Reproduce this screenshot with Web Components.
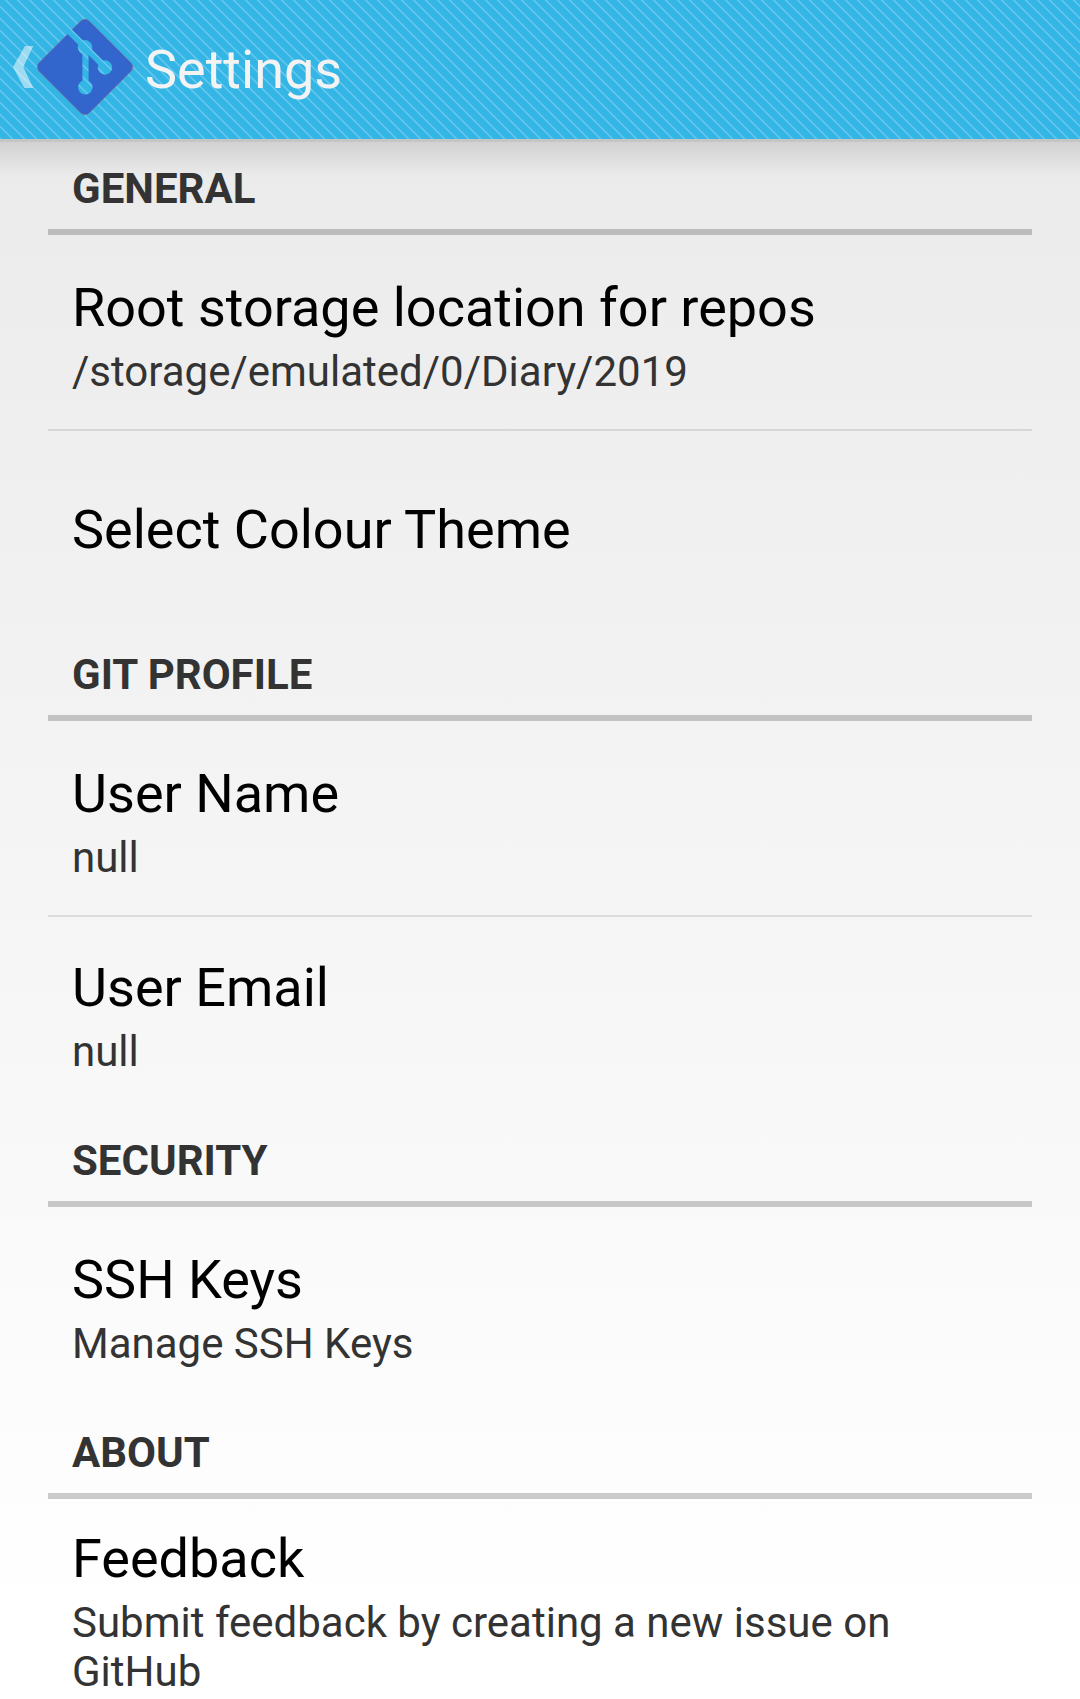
<!DOCTYPE html>
<html lang="en"><head><meta charset="utf-8"><title>Settings</title>
<style>body{margin:0;font-family:Roboto,"Liberation Sans",sans-serif}</style></head><body>
<settings-screen></settings-screen>
<script>
const define=(name,html,setup)=>customElements.define(name,class extends HTMLElement{
 connectedCallback(){ if(this.shadowRoot)return; const r=this.attachShadow({mode:'open'}); r.innerHTML=html; if(setup)setup(this,r);}
});
define('app-logo',`<style>:host{display:block;width:98px;height:98px;flex:none}svg{display:block}</style>
<svg width="98" height="98" viewBox="36 18 98 98"><defs><mask id="m" maskUnits="userSpaceOnUse" x="30" y="10" width="110" height="110"><rect x="30" y="10" width="110" height="110" fill="#fff"/>
<g stroke="#000" stroke-width="6.200" fill="none"><path d="M66 28L105 67"/><path d="M85.500 48V87"/></g><g fill="#000"><circle cx="85" cy="47.300" r="7.200"/><circle cx="105" cy="67.500" r="7.200"/><circle cx="85.300" cy="87.300" r="7.200"/></g></mask></defs>
<g mask="url(#m)"><rect x="49.500" y="31.500" width="71" height="71" rx="6" transform="rotate(45 85 67)" fill="#3366cc" stroke="#a0607a" stroke-width=".5"/></g></svg>`);
define('action-bar',`<style>:host{display:flex;align-items:flex-start;height:139px;box-sizing:border-box;background:#33b5e5;overflow:hidden;background-image:url("data:image/svg+xml,%3Csvg xmlns='http://www.w3.org/2000/svg' width='12' height='12'%3E%3Cpath d='M-12 -5.7L12 18.3M-12 -17.7L24 18.3M-12 6.3L12 30.3' stroke='%2366c7ec' stroke-width='1.6'/%3E%3C/svg%3E")}
.up{display:block;flex:none;width:24px;height:44px;margin:45px 0 0 12px}app-logo{margin:18px 0 0}h1{margin:38px 0 0 11px;font-size:54px;line-height:63px;font-weight:400;color:#f3f3f3}</style>
<svg class="up" viewBox="0 0 24 44"><path d="M13 1H21.300L11.300 22L21.300 43H12.300L1 22Z" fill="#fff" fill-opacity=".52"/></svg><app-logo></app-logo><h1><slot></slot></h1>`);
define('pref-category',`<style>:host{display:flex;flex-direction:column;justify-content:flex-end;box-sizing:border-box;height:98px;margin:0 48px 2px;border-bottom:6px solid rgba(0,0,0,.2)}
:host(:first-of-type){height:96px}
h2{margin:0;padding:0 24px 16px;font-size:42px;line-height:49px;font-weight:700;color:#333}</style><h2><slot></slot></h2>`);
define('pref-item',`<style>:host{display:block;box-sizing:border-box;height:192px;margin:0 48px;padding:39px 24px 0}
:host([divided]){height:194px;border-bottom:2px solid rgba(0,0,0,.1)}
:host([single]){padding-top:67px}
:host([multiline]){height:auto;padding:26px 24px 20px}
.t{font-size:54px;line-height:63px;color:#000}.s{font-size:42px;line-height:49px;margin-top:8px;color:#333}.s:empty{display:none}</style><div class="t"><slot></slot></div><div class="s"></div>`,(h,r)=>{r.querySelector('.s').textContent=h.getAttribute('summary')||''});
define('settings-screen',`<style>:host{display:block;height:1699px;overflow:hidden;background:linear-gradient(#e9e9e9,#fff 1620px)}
main{display:block;height:1560px;box-sizing:border-box;overflow:hidden;background:linear-gradient(rgba(0,0,0,.16) 0 3px,rgba(0,0,0,.11) 3px,rgba(0,0,0,0) 38px)}</style>
<action-bar>Settings</action-bar><main>
<pref-category>GENERAL</pref-category>
<pref-item divided summary="/storage/emulated/0/Diary/2019">Root storage location for repos</pref-item>
<pref-item single>Select Colour Theme</pref-item>
<pref-category>GIT PROFILE</pref-category>
<pref-item divided summary="null">User Name</pref-item>
<pref-item summary="null">User Email</pref-item>
<pref-category>SECURITY</pref-category>
<pref-item summary="Manage SSH Keys">SSH Keys</pref-item>
<pref-category>ABOUT</pref-category>
<pref-item multiline summary="Submit feedback by creating a new issue on GitHub">Feedback</pref-item>
</main>`);
</script></body></html>
